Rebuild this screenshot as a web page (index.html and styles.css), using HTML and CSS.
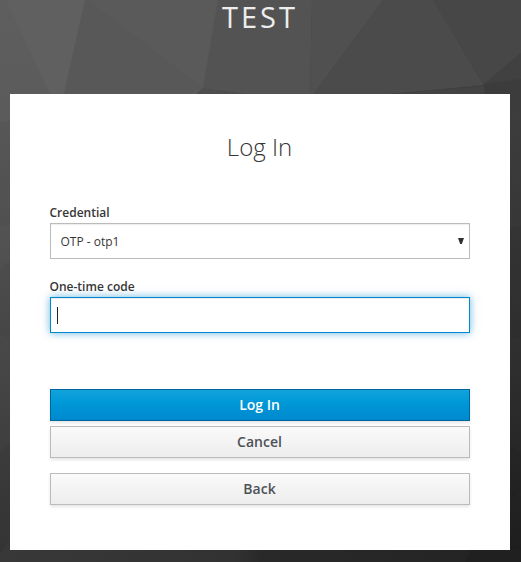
FILE: index.html
```html
<!DOCTYPE html>
<html lang="en">
<head>
<meta charset="utf-8">
<title>Log In</title>
<link rel="stylesheet" href="styles.css">
</head>
<body>
<svg class="backdrop" viewBox="0 0 521 562" preserveAspectRatio="none" aria-hidden="true">
  <defs>
    <linearGradient id="left" x1="0" y1="0" x2="0" y2="1">
      <stop offset="0" stop-color="#5e5e5e"/><stop offset=".22" stop-color="#5b5b5b"/>
      <stop offset=".42" stop-color="#525252"/><stop offset=".65" stop-color="#464646"/>
      <stop offset="1" stop-color="#353535"/>
    </linearGradient>
    <linearGradient id="right" x1="0" y1="0" x2="0" y2="1">
      <stop offset="0" stop-color="#474747"/><stop offset=".18" stop-color="#3d3d3d"/>
      <stop offset=".4" stop-color="#373737"/><stop offset=".65" stop-color="#2e2e2e"/>
      <stop offset=".85" stop-color="#252525"/><stop offset="1" stop-color="#1c1c1c"/>
    </linearGradient>
    <linearGradient id="base" x1="0" y1="0" x2="1" y2="0">
      <stop offset="0" stop-color="#383838"/><stop offset=".45" stop-color="#323232"/>
      <stop offset=".5" stop-color="#292929"/><stop offset=".88" stop-color="#252525"/>
      <stop offset="1" stop-color="#1b1b1b"/>
    </linearGradient>
  </defs>
  <path fill="url(#left)" d="M0 0H260V562H0z"/>
  <path fill="url(#right)" d="M260 0H521V562H260z"/>
  <path fill="#606060" d="M6 0H85L64 94H50z"/>
  <path fill="#585858" d="M85 0H218L203 88L190 94H64z"/>
  <path fill="#5a5a5a" d="M88 0H218L203 88z"/>
  <path fill="#535353" d="M218 0H312L310 94H250L203 88z"/>
  <path fill="#4d4d4d" d="M203 88L250 94H196z"/>
  <path fill="#505050" d="M312 0H383L314 94H310z"/>
  <path fill="#4b4b4b" d="M383 0H433L484 85L390 94H314z"/>
  <path fill="#474747" d="M433 0H521V53L484 84z"/>
  <path fill="#414141" d="M521 53V79L484 84z"/>
  <path fill="#434343" d="M484 86L390 94H486z"/>
  <path fill="#3c3c3c" d="M484 84L521 79V110H486z"/>
  <path fill="#000" opacity=".035" d="M0 122L10 120V224L0 226zM0 271L10 260V339L0 335zM0 453L10 442V550L0 562z"/>
  <path fill="#000" opacity=".04" d="M510 228L521 225V337L510 339zM510 445L521 453V490L510 500z"/>
  <path fill="url(#base)" d="M9 541L10 550H521V562H0V554z"/>
  <path fill="#202020" d="M471 550H521V562H465z"/>
</svg>
<header class="brand">TEST</header>
<main class="card">
  <h1 class="title">Log In</h1>
  <form>
    <div class="group">
      <label class="label">Credential</label>
      <div class="field select"><span class="value">OTP - otp1</span>
        <svg class="arrow" width="6" height="6" viewBox="0 0 6 6"><path d="M0 0h6L3.8 6H2.2z"/></svg>
      </div>
    </div>
    <div class="group">
      <label class="label">One-time code</label>
      <div class="field focused"><span class="caret"></span></div>
    </div>
    <div class="actions">
      <button type="button" class="btn primary">Log In</button>
      <button type="button" class="btn">Cancel</button>
      <button type="button" class="btn back">Back</button>
    </div>
  </form>
</main>
</body>
</html>
```
FILE: styles.css
```css
* { box-sizing: border-box; }
body {
  margin: 0;
  height: 562px;
  overflow: hidden;
  background: #393939;
  color: #363636;
  font: 12px/20px "Open Sans", sans-serif;
}
.backdrop {
  position: absolute;
  inset: 0;
  z-index: -1;
  width: 521px;
  height: 562px;
}
.brand {
  height: 94px;
  padding-right: 1px;
  color: #ededed;
  font-size: 29px;
  line-height: 33px;
  letter-spacing: 3px;
  text-align: center;
}
.card {
  width: 500px;
  height: 456px;
  margin: 0 auto 0 10px;
  padding: 37px 40px 0;
  background: #fff;
}
.title {
  margin: 0 0 40px;
  padding-right: 1px;
  font-size: 24px;
  line-height: 32px;
  font-weight: 300;
  text-align: center;
}
.group {
  margin-bottom: 18px;
}
.group + .group { margin-bottom: 56px; }
.label {
  display: block;
  height: 20px;
  margin-left: -0.5px;
  font-weight: 600;
  line-height: 20px;
}
.field {
  display: flex;
  align-items: center;
  height: 36px;
  border: 1px solid #bbb;
  box-shadow: inset 0 1px 1px rgba(3, 3, 3, .075);
}
.select {
  justify-content: space-between;
  padding: 0 5px 0 9.5px;
}
.value { padding-top: 2px; }
.arrow { fill: #303030; }
.focused {
  padding-left: 6px;
  border-color: #0088ce;
  box-shadow: inset 0 1px 1px rgba(3, 3, 3, .075), 0 0 8px rgba(0, 136, 206, .6);
}
.caret {
  width: 1px;
  height: 17px;
  background: #222;
}
.actions {
  display: flex;
  flex-direction: column;
  gap: 5px;
}
.btn {
  height: 32px;
  padding: 0 1px 0 0;
  border: 1px solid #bbb;
  background: linear-gradient(#fafafa, #ededed);
  box-shadow: 0 2px 3px rgba(3, 3, 3, .1);
  color: #4d5258;
  font: 600 14px/18px "Open Sans", sans-serif;
}
.primary {
  border-color: #00659c;
  background: linear-gradient(#13a3dc 0, #0099d8 40%, #0088ce);
  color: #fff;
}
.back { margin-top: 10px; }
```
